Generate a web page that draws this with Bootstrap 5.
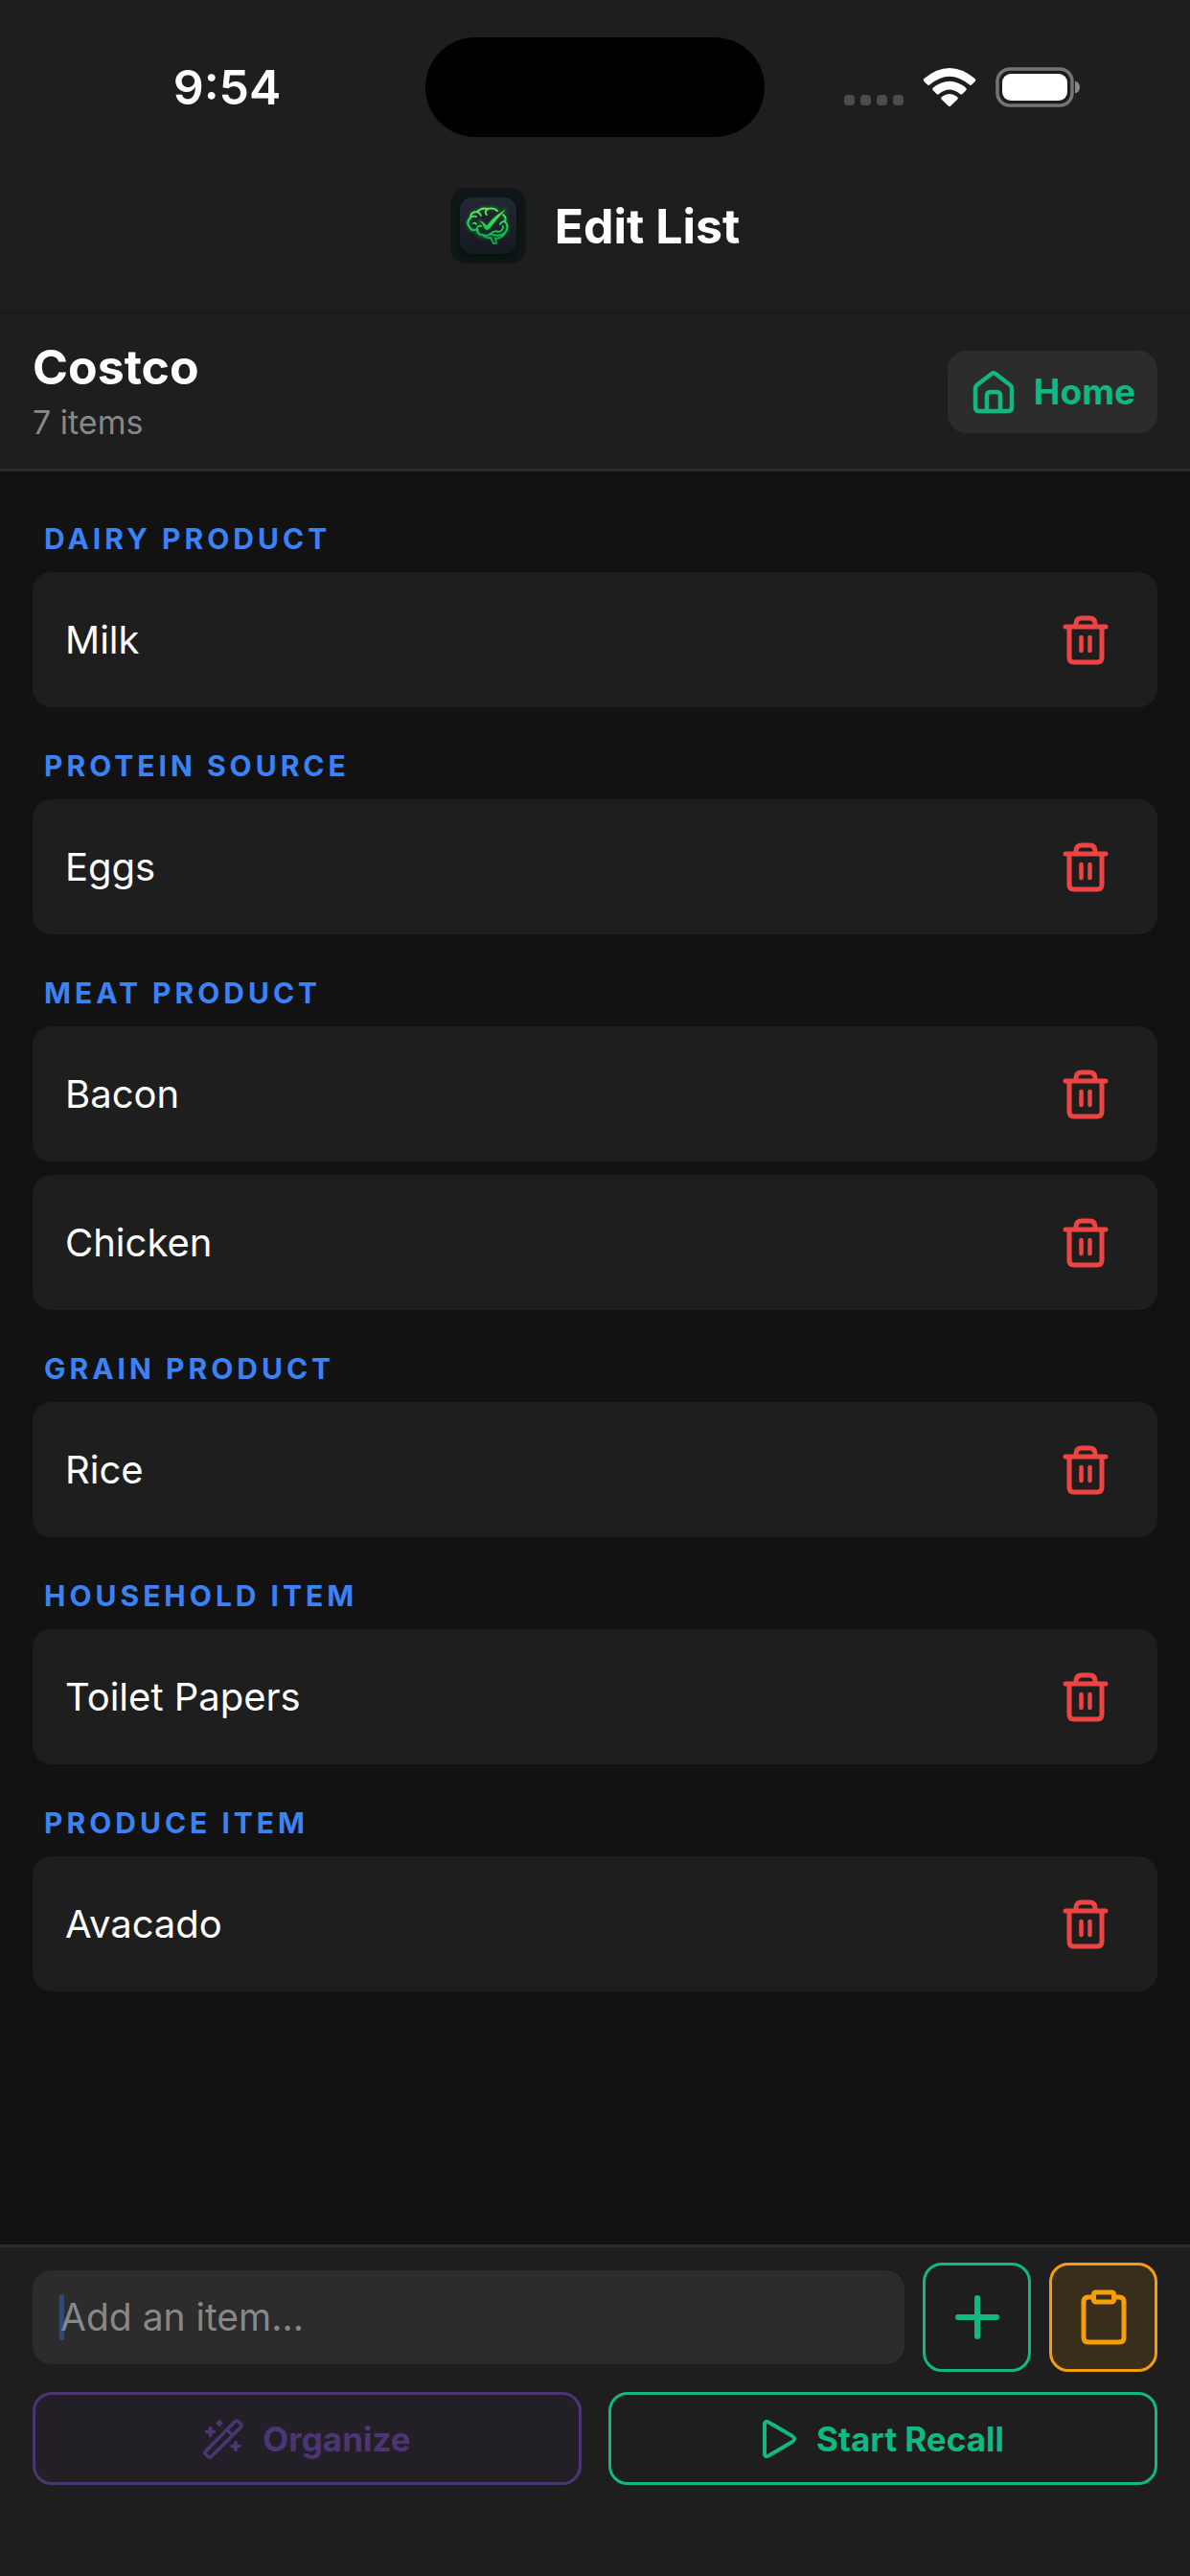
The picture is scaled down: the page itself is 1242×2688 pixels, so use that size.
<!DOCTYPE html>
<html lang="en" data-bs-theme="dark">
<head>
<meta charset="utf-8">
<meta name="viewport" content="width=device-width, initial-scale=1">
<title>Edit List</title>
<link href="https://cdn.jsdelivr.net/npm/bootstrap@5.3.0/dist/css/bootstrap.min.css" rel="stylesheet">
<style>
  :root { --page: #121212; --surface: #1e1e1e; --raised: #2c2c2c; --green: #10b981; --amber: #f59e0b; --violet: #4c3575; }
  body { background: var(--page); color: #fff; font-family: Inter, "Liberation Sans", sans-serif; font-size: 40px; line-height: 48px; }
  svg { display: block; flex: none; }
  .surface { background: var(--surface); }
  .gutter { padding-left: 34px; padding-right: 34px; }
  .status-bar { display: grid; grid-template-columns: 1fr 354px 1fr; padding-top: 39px; }
  .clock { font-size: 50px; font-weight: 600; padding-left: 30px; }
  .island { height: 104px; border-radius: 52px; background: #000; }
  .signals { gap: 20px; padding-left: 83px; }
  .title-bar { gap: 30px; padding-top: 53px; padding-bottom: 51px; border-bottom: 1px solid #151515; }
  .title-bar h1, .list-head h2 { font-size: 50px; font-weight: 700; line-height: 60px; margin: 0; }
  .list-head { border-bottom: 3px solid var(--raised); padding-top: 26px; padding-bottom: 24px; }
  .count { color: #888; font-size: 34px; line-height: 48px; margin: 4px 0 0; }
  .btn { --bs-btn-border-width: 3px; --bs-btn-border-radius: 20px; font-size: 35px; font-weight: 700; line-height: 44px; }
  .btn-home { --bs-btn-border-width: 0; background: var(--raised); color: var(--green); font-size: 37px; gap: 17px; padding: 20px 23px; }
  .list-area { padding-top: 9px; }
  .group-name { color: #3b82f6; font-size: 30px; font-weight: 700; letter-spacing: 4px; line-height: 36px; margin: 0; padding: 43px 12px 17px; }
  .items { gap: 14px; }
  .item { background: var(--surface); border-radius: 20px; padding: 12px 23px 12px 34px; height: 141px; }
  .btn-trash { --bs-btn-border-width: 0; color: #ef4444; padding: 14px 28px; }
  .composer { border-top: 3px solid var(--raised); padding-top: 16px; padding-bottom: 95px; }
  .entry { gap: 19px; margin-bottom: 21px; }
  .entry-box { background: var(--raised); border: 0; border-radius: 20px; font-size: 39px; line-height: 48px; padding: 25px 29px; color: #fff; }
  .entry-box::placeholder { color: #888; opacity: 1; }
  .caret { position: absolute; left: 28px; top: 25px; width: 5px; height: 48px; border-radius: 3px; background: #3b82f6; opacity: .35; }
  .btn-square { width: 113px; height: 114px; padding: 0; }
  .btn-add, .btn-recall { border-color: var(--green); color: var(--green); }
  .btn-paste { border-color: var(--amber); color: var(--amber); background: #392d1b; }
  .actions { gap: 28px; }
  .actions .btn { flex: 1 1 0; gap: 20px; height: 97px; padding: 0; }
  .btn-organize:disabled { border-color: var(--violet); color: var(--violet); background: #222026; opacity: 1; }
</style>
</head>
<body>
<svg class="d-none" aria-hidden="true">
  <symbol id="trash" viewBox="0 0 48 52"><g fill="none" stroke="currentColor" stroke-width="5" stroke-linecap="round" stroke-linejoin="round"><path d="M3 12H45M7 12V44Q7 49 12 49H36Q41 49 41 44V12M14 11V9Q14 3 20 3H28Q34 3 34 9V11"/><path stroke-width="4.500" d="M19.500 23V37M28.500 23V37"/></g></symbol>
</svg>
<div class="min-vh-100 d-flex flex-column">
  <header class="surface">
    <div class="status-bar">
      <div class="clock d-flex align-items-center justify-content-center">9:54</div>
      <div class="island"></div>
      <div class="signals d-flex align-items-center">
        <svg width="62" height="40" viewBox="0 0 62 40" fill="#4c4c4c"><rect y="28" width="11" height="11" rx="4"/><rect x="17" y="28" width="11" height="11" rx="4"/><rect x="34" y="28" width="11" height="11" rx="4"/><rect x="51" y="28" width="11" height="11" rx="4"/></svg>
        <svg width="56" height="40" viewBox="0 0 56 40" fill="#fff"><path d="M1.500 11Q28-11 54.500 11Q56 12.500 54.500 14L51 17.500Q50 18.500 48.500 17.300Q28 0 7.500 17.300Q6 18.500 5 17.500L1.500 14Q0 12.500 1.500 11ZM11 20.500Q28 7 45 20.500Q46.500 22 45 23.500L41.500 27Q40.300 28 39 27Q28 18 17 27Q15.700 28 14.500 27L11 23.500Q9.500 22 11 20.500ZM20 30Q28 24 36 30Q37.500 31.500 36 33L29.200 39.500Q28 40.500 26.800 39.500L20 33Q18.500 31.500 20 30Z"/></svg>
        <svg width="90" height="42" viewBox="0 0 90 42"><rect x="2" y="2" width="78" height="38" rx="13" fill="none" stroke="#757575" stroke-width="3.500"/><rect x="7" y="7" width="68" height="28" rx="9" fill="#fff"/><path d="M83 14.500Q88 16 88 21T83 27.500Z" fill="#8a8a8a"/></svg>
      </div>
    </div>
    <div class="title-bar d-flex align-items-center justify-content-center">
      <svg width="79" height="79" viewBox="0 0 79 79" role="img" aria-label="App logo">
        <defs>
          <linearGradient id="leaf" gradientUnits="userSpaceOnUse" x1="0" y1="20" x2="0" y2="58"><stop offset="0" stop-color="#7be35c"/><stop offset=".5" stop-color="#22d352"/><stop offset="1" stop-color="#0a9f4c"/></linearGradient>
          <linearGradient id="tile" x1="0" y1="0" x2="0" y2="1"><stop offset="0" stop-color="#242832"/><stop offset="1" stop-color="#161820"/></linearGradient>
          <filter id="glow" x="-30%" y="-30%" width="160%" height="160%"><feGaussianBlur stdDeviation="1.800"/></filter>
        </defs>
        <rect width="79" height="79" rx="17" fill="#101517"/>
        <rect x="9" y="13" width="61" height="60" rx="13" fill="#04180c" filter="url(#glow)"/>
        <rect x="10" y="10" width="59" height="59" rx="13" fill="url(#tile)"/>
        <path d="M50 24Q47 20 40 22Q34 20 29 24Q21 25 22 31Q16 36 20 41Q22 46 28 44Q28 50 34 50Q38 53 42 50Q51 52 57 47Q62 41 57 35Q59 31 55 28M29 34L38 42L58 22" fill="none" stroke="#0fa043" stroke-width="4" opacity=".5" filter="url(#glow)"/>
        <g fill="none" stroke="url(#leaf)" stroke-width="1.900" stroke-linecap="round" stroke-linejoin="round">
          <path d="M49 24Q45 20 39 22Q33 20 28 25Q21 25 21 31Q16 36 20 41Q23 46 28 43Q28 49 34 49Q38 51 42 48Q50 52 57 47Q62 41 57 35Q59 31 55 28"/>
          <path d="M28 25Q31 26 32 29M39 22Q35 25 38 28M21 31Q24 29 27 30M24 37Q26 36 27 38M28 43Q28 39 32 40M42 48Q46 44 50 46Q55 45 55 40M57 35Q53 35 52 38M57 47Q54 53 47 53L48 58H45L42 52Q37 53 34 49"/>
        </g>
        <path d="M28 33Q34 34 38 39Q46 28 60 21Q50 31 42 42Q38 47 35 42Q33 36 28 33Z" fill="url(#leaf)" stroke="#171f20" stroke-width=".8"/>
      </svg>
      <h1>Edit List</h1>
    </div>
    <div class="list-head gutter d-flex align-items-center justify-content-between">
      <div>
        <h2>Costco</h2>
        <p class="count">7 items</p>
      </div>
      <a href="#" class="btn btn-home d-flex align-items-center">
        <svg width="50" height="46" viewBox="0 0 50 46" fill="none" stroke="currentColor" stroke-width="4.500" stroke-linejoin="round"><path d="M6 19Q6 17 8 15.500L23 4Q25 2.500 27 4L42 15.500Q44 17 44 19V39Q44 43 40 43H10Q6 43 6 39ZM18 43V27Q18 23 22 23H28Q32 23 32 27V43"/></svg>
        Home
      </a>
    </div>
  </header>

  <main class="list-area gutter flex-grow-1">
    <section><h3 class="group-name">DAIRY PRODUCT</h3>
      <div class="items d-flex flex-column">
        <div class="item d-flex align-items-center justify-content-between">Milk<button class="btn btn-trash" type="button" aria-label="Delete Milk"><svg width="48" height="52"><use href="#trash"/></svg></button></div>
      </div></section>
    <section><h3 class="group-name">PROTEIN SOURCE</h3>
      <div class="items d-flex flex-column">
        <div class="item d-flex align-items-center justify-content-between">Eggs<button class="btn btn-trash" type="button" aria-label="Delete Eggs"><svg width="48" height="52"><use href="#trash"/></svg></button></div>
      </div></section>
    <section><h3 class="group-name">MEAT PRODUCT</h3>
      <div class="items d-flex flex-column">
        <div class="item d-flex align-items-center justify-content-between">Bacon<button class="btn btn-trash" type="button" aria-label="Delete Bacon"><svg width="48" height="52"><use href="#trash"/></svg></button></div>
        <div class="item d-flex align-items-center justify-content-between">Chicken<button class="btn btn-trash" type="button" aria-label="Delete Chicken"><svg width="48" height="52"><use href="#trash"/></svg></button></div>
      </div></section>
    <section><h3 class="group-name">GRAIN PRODUCT</h3>
      <div class="items d-flex flex-column">
        <div class="item d-flex align-items-center justify-content-between">Rice<button class="btn btn-trash" type="button" aria-label="Delete Rice"><svg width="48" height="52"><use href="#trash"/></svg></button></div>
      </div></section>
    <section><h3 class="group-name">HOUSEHOLD ITEM</h3>
      <div class="items d-flex flex-column">
        <div class="item d-flex align-items-center justify-content-between">Toilet Papers<button class="btn btn-trash" type="button" aria-label="Delete Toilet Papers"><svg width="48" height="52"><use href="#trash"/></svg></button></div>
      </div></section>
    <section><h3 class="group-name">PRODUCE ITEM</h3>
      <div class="items d-flex flex-column">
        <div class="item d-flex align-items-center justify-content-between">Avacado<button class="btn btn-trash" type="button" aria-label="Delete Avacado"><svg width="48" height="52"><use href="#trash"/></svg></button></div>
      </div></section>
  </main>

  <footer class="composer surface gutter">
    <div class="entry d-flex align-items-center">
      <div class="position-relative flex-grow-1">
        <input class="entry-box w-100 d-block" type="text" placeholder="Add an item..." aria-label="Add an item">
        <span class="caret"></span>
      </div>
      <button class="btn btn-square btn-add d-flex align-items-center justify-content-center" type="button" aria-label="Add"><svg width="46" height="46" viewBox="0 0 46 46" stroke="currentColor" stroke-width="6" stroke-linecap="round"><path d="M3 23H43M23 3V43"/></svg></button>
      <button class="btn btn-square btn-paste d-flex align-items-center justify-content-center" type="button" aria-label="Paste list"><svg width="48" height="58" viewBox="0 0 48 58" fill="none" stroke="currentColor" stroke-width="5" stroke-linejoin="round"><path d="M13 8H8Q3 8 3 13V50Q3 55 8 55H40Q45 55 45 50V13Q45 8 40 8H35"/><rect x="13.500" y="3" width="21" height="10" rx="2"/></svg></button>
    </div>
    <div class="actions d-flex">
      <button class="btn btn-organize d-flex align-items-center justify-content-center" type="button" disabled>
        <svg width="42" height="42" viewBox="0 0 42 42" fill="none" stroke="currentColor" stroke-width="3.500" stroke-linejoin="round" stroke-linecap="round"><path d="M2.500 34L33 3Q35 1 37 3L39 5Q41 7 39 9L8.500 39.500Q6.500 41 4.500 39L2.500 37Q1 35.500 2.500 34ZM25 11.500L30.500 17"/><path d="M7.500 9.500V17.500M3.500 13.500H11.500M34 24.500V32.500M30 28.500H38"/><path fill="currentColor" stroke-width="2" d="M17 2L19.500 4.500L17 7L14.500 4.500Z"/></svg>
        Organize
      </button>
      <button class="btn btn-recall d-flex align-items-center justify-content-center" type="button">
        <svg width="37" height="40" viewBox="0 0 37 40" fill="none" stroke="currentColor" stroke-width="4" stroke-linejoin="round"><path d="M3 5Q3 0 8 3L32 17Q36 20 32 23L8 37Q3 40 3 35Z"/></svg>
        Start Recall
      </button>
    </div>
  </footer>
</div>
<script src="https://cdn.jsdelivr.net/npm/bootstrap@5.3.0/dist/js/bootstrap.bundle.min.js"></script>
</body>
</html>
